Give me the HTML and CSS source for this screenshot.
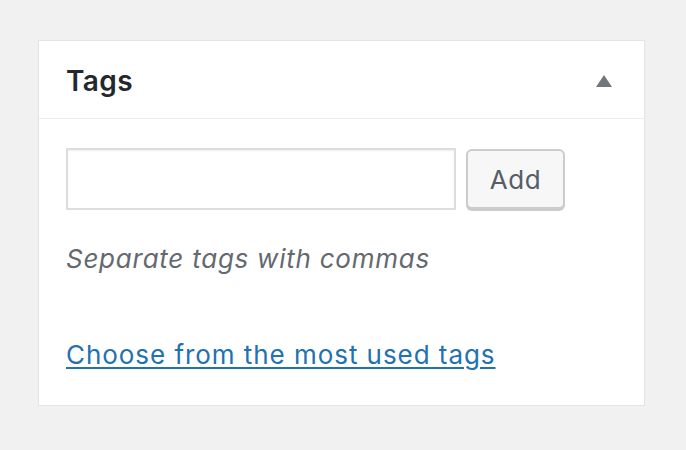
FILE: index.html
```html
<!DOCTYPE html>
<html lang="en">
<head>
<meta charset="utf-8">
<title>Tags</title>
<link rel="stylesheet" href="styles.css">
</head>
<body>
<div class="postbox">
  <div class="postbox-header">
    <h2 class="postbox-title">Tags</h2>
    <svg class="toggle" width="16" height="12" viewBox="0 0 16 12" aria-hidden="true"><polygon points="8,0 16,12 0,12" fill="#72777c"/></svg>
  </div>
  <div class="inside">
    <div class="tag-row">
      <input class="tag-input" type="text" aria-label="Add new tag">
      <button class="btn" type="button">Add</button>
    </div>
    <p class="howto">Separate tags with commas</p>
    <a class="cloud-link" href="#">Choose from the most used tags</a>
  </div>
</div>
</body>
</html>
```
FILE: styles.css
```css
html, body {
  margin: 0;
  padding: 0;
  background: #f1f1f1;
  font-family: Inter, "Noto Sans", "Liberation Sans", sans-serif;
}

body {
  padding: 40px 0 0 38px;
}

.postbox {
  width: 605px;
  height: 364px;
  background: #fff;
  border: 1px solid #e2e4e7;
  box-shadow: 0 1px 1px rgba(0, 0, 0, 0.04);
  display: flex;
  flex-direction: column;
}

.postbox-header {
  height: 78px;
  flex: none;
  display: flex;
  align-items: center;
  justify-content: space-between;
  padding: 2px 32px 0 27px;
  box-sizing: border-box;
  border-bottom: 1px solid #ececec;
}

.postbox-title {
  margin: 0;
  font-size: 28px;
  font-weight: 600;
  letter-spacing: 0.4px;
  color: #23282d;
  line-height: 1;
}

.toggle {
  display: block;
}

.inside {
  padding: 29px 27px 0;
  display: flex;
  flex-direction: column;
  align-items: flex-start;
}

.tag-row {
  display: flex;
  gap: 10px;
  align-items: flex-start;
}

.tag-input {
  box-sizing: border-box;
  width: 390px;
  height: 62px;
  margin: 0;
  border: 2px solid #dddddd;
  box-shadow: inset 0 1px 2px rgba(0, 0, 0, 0.07);
  background: #fff;
  border-radius: 0;
  outline: none;
}

.btn {
  box-sizing: border-box;
  width: 99px;
  height: 60px;
  margin: 1px 0 0;
  padding: 0;
  font-family: Inter, "Noto Sans", "Liberation Sans", sans-serif;
  font-size: 26px;
  letter-spacing: 0.5px;
  color: #555d66;
  background: #f7f7f7;
  border: 2px solid #cccccc;
  border-radius: 6px;
  box-shadow: 0 2px 0 #cccccc;
}

.howto {
  margin: 31px 0 0;
  font-size: 26px;
  line-height: 36px;
  font-style: italic;
  letter-spacing: 0.75px;
  color: #646970;
}

.cloud-link {
  margin-top: 60px;
  font-size: 26px;
  line-height: 36px;
  letter-spacing: 0.95px;
  color: #2271b1;
  text-decoration: underline;
  text-underline-offset: 3px;
  text-decoration-thickness: 2px;
}
```
